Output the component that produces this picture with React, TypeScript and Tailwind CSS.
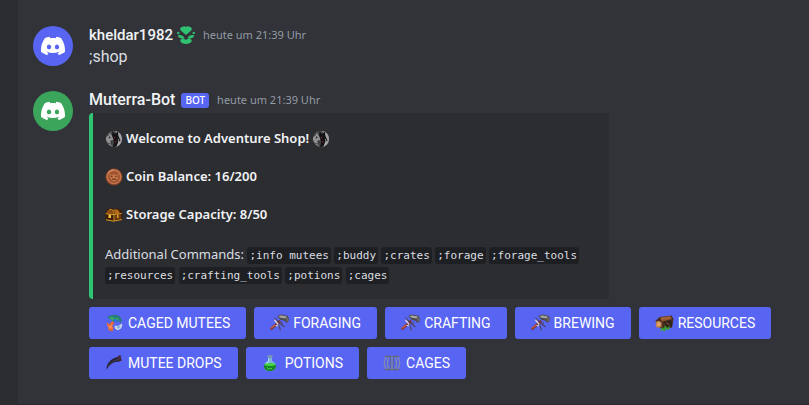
import React from 'react';
import { SiDiscord } from 'react-icons/si';

const FlowerIcon = () => (
  <svg viewBox="0 0 18 18" className="h-[18px] w-[18px]" fill="#2fc071" aria-hidden="true">
    <path d="M9 9 3.800 4.400C2.300 2.700 3.700.4 6 .7 7.200-.1 8.300.1 9 .9c.7-.8 1.800-1 3-.2 2.300-.3 3.700 2 2.200 3.700Z" />
    <circle cx="1.300" cy="6.900" r="1.200" />
    <circle cx="16.700" cy="6.900" r="1.200" />
    <path d="M.8 9.300c2.700-.7 5.700.2 6.500 2.900C4.400 13.200 1.300 12 .8 9.300ZM17.200 9.300c-2.700-.7-5.700.2-6.500 2.900 2.900 1 6-.2 6.500-2.900Z" />
    <path d="M9 14.200c.9-1.500 2.800-2 4.500-1.300 1 .4 1.500 1.300 1.100 2.300-.7 1.800-2.800 2.700-5.600 2.700s-4.900-.9-5.600-2.700c-.4-1 .1-1.900 1.100-2.300 1.700-.7 3.600-.2 4.500 1.300Z" />
  </svg>
);

const WolfIcon = () => (
  <svg viewBox="0 0 18 18" className="h-[18px] w-[18px]" aria-hidden="true">
    <circle cx="9" cy="9" r="8.300" fill="#4c4c4f" />
    <path d="M10 .8a8.300 8.300 0 0 1 0 16.400l3-4.200 1.400-5Z" fill="#a3a3a5" />
    <path d="M7.500 1 10 4l2.800-2.500.7 5 2 4-2.700 2-1.300 4L8 17l1-5-2-6Z" fill="#141416" />
    <path d="M1 7.500 4 5l.4-2.500L7 6l1.500 3.500-2.300 3.700L3 13l-2-3Z" fill="#919194" />
    <path d="m4.500 6 1.500 2-2.500.6ZM5 11l3-1-1 5Z" fill="#343438" />
    <path d="m9.300 6.500 1.300 1.700-1.300-.3ZM10.200 11l1.500.8-.9 1Z" fill="#c52d38" />
    <path d="m13.500 9 .5 5M4 14l2.500 1.800" stroke="#c0c0c2" strokeWidth=".7" />
  </svg>
);

const CoinIcon = () => (
  <svg viewBox="0 0 18 18" className="h-[18px] w-[18px]" aria-hidden="true">
    <circle cx="9" cy="9" r="8.500" fill="#8a4227" />
    <circle cx="9" cy="8.800" r="7.500" fill="#c27650" />
    <circle cx="9" cy="9" r="6" fill="#a0512f" />
    <path d="M4.500 5.500 7 7l2-1 2 1 2.500-1.500-.5 5-2.500 2.700h-3L5 10.500Z" fill="#c17446" />
    <path d="m5.500 8 2 .7M12.500 8l-2 .7M7 11.200h4" stroke="#642c1c" strokeWidth="1" />
    <path d="M3 5a7.300 7.300 0 0 1 6-3.300" fill="none" stroke="#df956c" />
  </svg>
);

const ChestIcon = () => (
  <svg viewBox="0 0 18 18" className="h-[18px] w-[18px]" aria-hidden="true">
    <path d="M.5 8C.5 5 2 3.200 4.500 2.800h9c2.500.3 3.700 2 3.700 4.200v7L8.500 15.700.5 14Z" fill="#3c1e08" />
    <path d="M1.500 7.300c.2-2.300 1.400-3.500 3-3.500C7 4 8 5.500 8.200 8Z" fill="#8c4d12" />
    <path d="M7 3.500h5c2 1 2.500 2 2.500 4l-4.500.6C10 6 9 4.300 7 3.500Z" fill="#b56a19" />
    <path d="m10 9.500 6-1v4.300l-6 1.400Z" fill="#6b3a0e" />
    <path d="M.8 7.700 8.800 8.700l8-1.300M4.500 3.300c3 0 4.500 2 4.500 5.200v6.700M1 13.700l7.500 1.500 8.500-1.700" fill="none" stroke="#d99b2b" strokeWidth="1" />
    <path d="M3.500 8.500H6V12H3.500Z" fill="#f0c445" />
    <path d="M12 8.500h1.500v3.500H12Z" fill="#d99b2b" />
  </svg>
);

const CreatureIcon = () => (
  <svg viewBox="0 0 18 18" className="h-[18px] w-[19px]" aria-hidden="true">
    <path d="M1.500 3.500C5 .4 11 0 14.200 2.500c2.300 2 2.100 4.500 1.300 6.500L12 5.500 7.500 8 5 5.200Z" fill="#247b79" />
    <path d="m3 3.500 4-1 2 2 3-1 2 3-3-.5L8 7.500Z" fill="#39a568" />
    <path d="m8 5 3 .3 3 3-4-1-2.500 1.500Z" fill="#2a73bd" />
    <path d="M1 8.500 4 10l3-3 2 2-2.500 3 1.500 1.500-1 4-4-1.500-.5-3Z" fill="#e66a36" />
    <path d="m1.300 11 3 1.500 2-2 .7 1.500-2 3Z" fill="#f49258" />
    <path d="m9.500 11.500 3 .5 4-2.500c.8 4-1.500 6.500-5 6.500L9 14Z" fill="#c8d6e7" />
    <path d="m11 13 2.500-1 1.500.7-2 2Z" fill="#7ba8d8" />
  </svg>
);

const HammerIcon = () => (
  <svg viewBox="0 0 19 18" className="h-[18px] w-[19px]" aria-hidden="true">
    <path d="m4.500 3.500 4.500 5 5.500 4.500M8.500 10l2 6.500M12 8v4" stroke="#51476a" strokeWidth="1.100" />
    <path d="m.8 15.300 9.500-8.500" stroke="#70363f" strokeWidth="2.500" />
    <path d="m1 14.500 4-3.500" stroke="#d0583f" strokeWidth="1.500" />
    <path d="m4.500 6 3.700 4.500M5.500 11.200 8 12" stroke="#ded5df" strokeWidth="1.200" />
    <path d="M7.500 2.500C8.500 1.200 10 .5 11.500.6l6 1.200c1.200 1.200 1.700 3.400 1 5.200L16.500 9l-2-2.300-4-1Z" fill="#4b494c" />
    <path d="M8.500 2.500c1-.9 2-1.200 3.200-1l5.300 1-1.500 2-5-.8Z" fill="#a5a2a2" />
    <path d="m16 4.700 1.700-1.500c.7 1 .7 2 .3 3.200L16.500 8Z" fill="#6f6968" />
  </svg>
);

const HornIcon = () => (
  <svg viewBox="0 0 19 18" className="h-[18px] w-[19px]" aria-hidden="true">
    <path d="M1.500 16C1 9.500 6 4.500 12.500 3l2.600-2 1.500 5.500-2.500 1C8 7.500 4.500 10.500 1.500 16Z" fill="#252333" />
    <path d="M3 12.500C6 8 9 6.300 13.500 5.500" fill="none" stroke="#474151" />
    <path d="m12.500 3 2.600-2 1.500 5.500-2.500 1Z" fill="#492b40" />
  </svg>
);

const PotionIcon = () => (
  <svg viewBox="0 0 19 18" className="h-[18px] w-[19px]" aria-hidden="true">
    <path d="M6 3h4v4c2.700 1 4.200 3 4 5.400C13.800 15.500 11.500 17 8 17s-6-1.700-6-4.600C2 10 3.500 7.800 6 7Z" fill="#7bb7dd" />
    <path d="M2.300 10.500c3 1 7.500 1 11.300 0 1.400 4-1.400 6.500-5.600 6.500s-7-2.500-5.700-6.500Z" fill="#168629" />
    <ellipse cx="8" cy="10.500" rx="5.200" ry="1.500" fill="#43d33e" />
    <path d="M5 2c1-1.500 4.800-1.500 6 0l-1 2H6Z" fill="#7894b7" />
    <path d="M5 13.500c1 1.300 3 1.700 5 1" fill="none" stroke="#52d447" />
    <path d="M6.500 5v3L4 9.300" fill="none" stroke="#c0def1" strokeWidth=".8" />
  </svg>
);

const CageIcon = () => (
  <svg viewBox="0 0 19 18" className="h-[18px] w-[19px]" fill="none" aria-hidden="true">
    <path d="M2 2.500h14M2 15.500h14" stroke="#626477" strokeWidth="1.500" />
    <path d="M3.500 3C.5 5.500.5 12.500 3.500 15M6 3c-2 3-2 9 0 12M9 2v14M12 3c2 3 2 9 0 12M14.500 3c3 2.500 3 9.500 0 12" stroke="#868cab" strokeWidth="1.200" />
    <path d="M7.500 3.500v11M10.500 3.500v11" stroke="#55609a" />
    <path d="M1.500 9h15" stroke="#6873a8" strokeWidth=".6" />
  </svg>
);

const LogIcon = () => (
  <svg viewBox="0 0 19 18" className="h-[18px] w-[19px]" aria-hidden="true">
    <path d="m4.500 3 12-1.500L18.500 5l-1.500 8.500-7 2-7-2L.5 7Z" fill="#4a2f1d" />
    <path d="m5 3.500 10-1.500 2 3L7 7.500Z" fill="#94562e" />
    <path d="m6 5 9-1.500" stroke="#b06c3c" />
    <path d="m9 7.500 7-1.500 1.500 5-3 3-4-1Z" fill="#30231b" />
    <path d="M.8 8.500C2 6.500 5 6.500 6.500 8.500l.3 3.500L4.500 14 1 13Z" fill="#bd7f4d" />
    <path d="M2 9c1-1 2.500-1 3.500.3v2L4 12.500l-2-.7Z" fill="#dca36f" />
    <path d="m5 17 2-4 2 2 1-4 2 3 3-2-1 4-3-1-2 3-1-2Z" fill="#36a632" />
    <path d="m11 8.500 4 2.500" stroke="#78543b" />
  </svg>
);

const commands = [
  ';info mutees',
  ';buddy',
  ';crates',
  ';forage',
  ';forage_tools',
  ';resources',
  ';crafting_tools',
  ';potions',
  ';cages',
];

const actionRows = [
  [
    { label: 'CAGED MUTEES', Icon: CreatureIcon },
    { label: 'FORAGING', Icon: HammerIcon },
    { label: 'CRAFTING', Icon: HammerIcon },
    { label: 'BREWING', Icon: HammerIcon },
    { label: 'RESOURCES', Icon: LogIcon },
  ],
  [
    { label: 'MUTEE DROPS', Icon: HornIcon },
    { label: 'POTIONS', Icon: PotionIcon },
    { label: 'CAGES', Icon: CageIcon },
  ],
];

const Avatar: React.FC<{ className: string }> = ({ className }) => (
  <div className={`mt-0.5 flex h-10 w-10 shrink-0 items-center justify-center rounded-full text-white ${className}`}>
    <SiDiscord size={24} />
  </div>
);

const App: React.FC = () => {
  return (
    <div className="flex min-h-screen bg-[#2b2d31] pl-[18px] font-['Noto_Sans',sans-serif] text-[#dbdee1]">
      <main className="min-w-0 flex-1 border-b border-[#25262a] bg-[#313338] pt-6 pr-4 pl-[15px]">
        {/* User message */}
        <article className="flex gap-4">
          <Avatar className="bg-[#5865f2]" />
          <div>
            <header className="flex h-[22px] items-center">
              <h2 className="font-[Roboto,sans-serif] text-[15px] font-medium text-[#f2f3f5]">kheldar1982</h2>
              <span className="ml-1 flex">
                <FlowerIcon />
              </span>
              <time className="ml-2 text-[11px] text-[#949ba4]">heute um 21:39 Uhr</time>
            </header>
            <p className="font-[Roboto,sans-serif] text-base leading-[22px]">;shop</p>
          </div>
        </article>

        {/* Bot message */}
        <article className="mt-[21px] flex gap-4">
          <Avatar className="bg-[#3ba55c]" />
          <div className="min-w-0 flex-1">
            <header className="flex h-[22px] items-center">
              <h2 className="font-[Roboto,sans-serif] text-base font-medium text-[#f2f3f5]">Muterra-Bot</h2>
              <span className="ml-1.5 flex h-[15px] items-center rounded-[3px] bg-[#5865f2] px-1 text-[10px] font-medium text-white">
                BOT
              </span>
              <time className="ml-2 text-[11px] text-[#949ba4]">heute um 21:39 Uhr</time>
            </header>

            <section className="mt-0.5 max-w-[520px] rounded border-l-4 border-[#2fc673] bg-[#2b2d31] pt-4 pr-4 pb-3.5 pl-3 text-[13px] leading-[19px]">
              <div className="flex flex-col gap-[19px] font-semibold text-[#f2f3f5]">
                <p className="flex items-center gap-[3px]">
                  <WolfIcon />
                  Welcome to Adventure Shop!
                  <WolfIcon />
                </p>
                <p className="flex items-center gap-[3px]">
                  <CoinIcon />
                  Coin Balance: 16/200
                </p>
                <p className="flex items-center gap-[3px]">
                  <ChestIcon />
                  Storage Capacity: 8/50
                </p>
              </div>
              <p className="mt-[21px]">
                Additional Commands:{' '}
                {commands.map((command) => (
                  <React.Fragment key={command}>
                    <code className="rounded-[3px] bg-[#1e1f22] p-0.5 font-['DejaVu_Sans_Mono',monospace] text-[11px] whitespace-nowrap">
                      {command}
                    </code>{' '}
                  </React.Fragment>
                ))}
              </p>
            </section>

            <div className="mt-2 flex flex-col gap-2">
              {actionRows.map((row) => (
                <div key={row[0].label} className="flex flex-wrap gap-2">
                  {row.map(({ label, Icon }) => (
                    <button
                      key={label}
                      type="button"
                      className="flex h-8 items-center gap-1 rounded-[3px] bg-[#5865f2] px-4 font-[Roboto,sans-serif] text-sm font-normal text-white"
                    >
                      <Icon />
                      {label}
                    </button>
                  ))}
                </div>
              ))}
            </div>
          </div>
        </article>
      </main>
    </div>
  );
};

export default App;
